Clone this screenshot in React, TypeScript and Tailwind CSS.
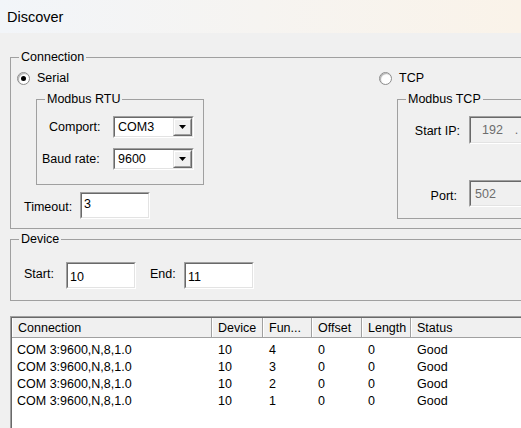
import React from "react";

function Radio({ checked }: { checked?: boolean }) {
  return (
    <div className="w-[13px] h-[13px] rounded-full border border-[#8c8c8c] bg-white flex items-center justify-center shadow-[inset_1px_1px_1px_#b0b0b0]">
      {checked ? <div className="w-[5px] h-[5px] rounded-full bg-black" /> : null}
    </div>
  );
}

function Group({
  label,
  className,
  children,
}: {
  label: string;
  className: string;
  children?: React.ReactNode;
}) {
  return (
    <fieldset className={`border border-[#a0a0a0] ${className}`}>
      <legend className="ml-[8px] px-[2px] leading-[14px]">{label}</legend>
      {children}
    </fieldset>
  );
}

function Sunken({
  className,
  innerClassName,
  children,
}: {
  className: string;
  innerClassName: string;
  children?: React.ReactNode;
}) {
  return (
    <div className={`border border-t-[#a0a0a0] border-l-[#a0a0a0] border-b-white border-r-white ${className}`}>
      <div className={`h-full w-full border border-t-[#696969] border-l-[#696969] border-b-[#e3e3e3] border-r-[#e3e3e3] ${innerClassName}`}>
        {children}
      </div>
    </div>
  );
}

function Combo({ value }: { value: string }) {
  return (
    <Sunken className="w-[81px] h-[22px]" innerClassName="bg-white flex items-center">
      <span className="flex-1 pl-[3px] leading-[14px]">{value}</span>
      <div className="h-full w-[19px] border border-t-[#e3e3e3] border-l-[#e3e3e3] border-b-[#696969] border-r-[#696969]">
        <div className="h-full w-full bg-[#f0f0f0] border border-t-white border-l-white border-b-[#a0a0a0] border-r-[#a0a0a0] flex items-center justify-center">
          <svg width="7" height="4" viewBox="0 0 7 4">
            <path d="M0 0H7L3.5 4Z" fill="#000" />
          </svg>
        </div>
      </div>
    </Sunken>
  );
}

const rows = [
  { c: "COM 3:9600,N,8,1.0", d: "10", f: "4", o: "0", l: "0", s: "Good" },
  { c: "COM 3:9600,N,8,1.0", d: "10", f: "3", o: "0", l: "0", s: "Good" },
  { c: "COM 3:9600,N,8,1.0", d: "10", f: "2", o: "0", l: "0", s: "Good" },
  { c: "COM 3:9600,N,8,1.0", d: "10", f: "1", o: "0", l: "0", s: "Good" },
];

export default function App() {
  return (
    <div className="w-[521px] h-[428px] overflow-hidden bg-[#f0f0f0] text-black font-['Liberation_Sans',Arial,sans-serif] text-[12.5px] leading-[14px]">
      {/* Title bar */}
      <div className="h-[33px] flex items-center pl-[7px] bg-gradient-to-r from-[#f2f5f9] via-[#f6f4f1] to-[#faf3e9]">
        <span className="text-[14.5px]">Discover</span>
      </div>

      <div className="pl-[10px]">
        {/* Connection */}
        <Group label="Connection" className="mt-[17px] w-[530px] h-[179px]">
          <div className="flex">
            {/* Serial column */}
            <div className="w-[368px] flex flex-col">
              <div className="mt-[6px] h-[16px] flex items-center pl-[6px] gap-[7px]">
                <Radio checked />
                <span>Serial</span>
              </div>
              <Group label="Modbus RTU" className="mt-[6px] ml-[25px] w-[168px] h-[93px]">
                <div className="mt-[10px] h-[22px] flex items-center">
                  <span className="ml-[12px] w-[64px]">Comport:</span>
                  <Combo value="COM3" />
                </div>
                <div className="mt-[10px] h-[22px] flex items-center">
                  <span className="ml-[5px] w-[71px]">Baud rate:</span>
                  <Combo value="9600" />
                </div>
              </Group>
              <div className="mt-[7px] flex items-center">
                <span className="ml-[13px] w-[56px] pt-[2px]">Timeout:</span>
                <Sunken className="w-[70px] h-[27px]" innerClassName="bg-white pl-[2px] pt-[3px]">
                  3
                </Sunken>
              </div>
            </div>

            {/* TCP column */}
            <div className="flex-1 flex flex-col">
              <div className="mt-[6px] h-[16px] flex items-center gap-[7px]">
                <Radio />
                <span>TCP</span>
              </div>
              <Group label="Modbus TCP" className="mt-[6px] ml-[18px] w-[140px] h-[127px]">
                <div className="mt-[10px] h-[28px] flex items-center">
                  <span className="w-[62px] text-right pt-[2px]">Start IP:</span>
                  <Sunken className="ml-[9px] w-[80px] h-[28px]" innerClassName="bg-[#f0f0f0] flex items-center pl-[11px] text-[#6d6d6d]">
                    <span>192</span>
                    <span className="ml-[12px]">.</span>
                  </Sunken>
                </div>
                <div className="mt-[36px] h-[27px] flex items-center">
                  <span className="w-[62px] text-right pl-[2px] pt-[4px]">
                    <span className="mr-[3px]">Port:</span>
                  </span>
                  <Sunken className="ml-[9px] w-[80px] h-[27px]" innerClassName="bg-[#f0f0f0] pl-[4px] pt-[5px] text-[#6d6d6d]">
                    502
                  </Sunken>
                </div>
              </Group>
            </div>
          </div>
        </Group>

        {/* Device */}
        <Group label="Device" className="mt-[3px] w-[530px] h-[69px]">
          <div className="mt-[16px] flex items-center">
            <span className="ml-[13px] w-[42px] pb-[4px]">Start:</span>
            <Sunken className="w-[70px] h-[27px]" innerClassName="bg-white pl-[2px] pt-[6px]">
              10
            </Sunken>
            <span className="ml-[14px] w-[34px] pb-[4px]">End:</span>
            <Sunken className="w-[70px] h-[27px]" innerClassName="bg-white pl-[2px] pt-[6px]">
              11
            </Sunken>
          </div>
        </Group>

        {/* List view */}
        <Sunken className="mt-[15px] w-[530px] h-[140px]" innerClassName="bg-white flex flex-col">
          <div className="h-[20px] flex bg-[#f0f0f0] border-b border-b-[#a0a0a0]">
            <div className="w-[200px] border-l border-l-white border-r border-r-[#a0a0a0] pl-[5px] pt-[1px] flex items-center">Connection</div>
            <div className="w-[51px] border-l border-l-white border-r border-r-[#a0a0a0] pl-[5px] pt-[1px] flex items-center">Device</div>
            <div className="w-[49px] border-l border-l-white border-r border-r-[#a0a0a0] pl-[5px] pt-[1px] flex items-center">Fun...</div>
            <div className="w-[50px] border-l border-l-white border-r border-r-[#a0a0a0] pl-[5px] pt-[1px] flex items-center">Offset</div>
            <div className="w-[49px] border-l border-l-white border-r border-r-[#a0a0a0] pl-[5px] pt-[1px] flex items-center">Length</div>
            <div className="w-[120px] border-l border-l-white border-r border-r-[#a0a0a0] pl-[5px] pt-[1px] flex items-center">Status</div>
          </div>
          <div className="mt-[3px] flex flex-col">
            {rows.map((r, i) => (
              <div key={i} className="h-[17px] flex items-center">
                <div className="w-[200px] pl-[5px]">{r.c}</div>
                <div className="w-[51px] pl-[6px]">{r.d}</div>
                <div className="w-[49px] pl-[6px]">{r.f}</div>
                <div className="w-[50px] pl-[6px]">{r.o}</div>
                <div className="w-[49px] pl-[6px]">{r.l}</div>
                <div className="w-[120px] pl-[6px]">{r.s}</div>
              </div>
            ))}
          </div>
        </Sunken>
      </div>
    </div>
  );
}
